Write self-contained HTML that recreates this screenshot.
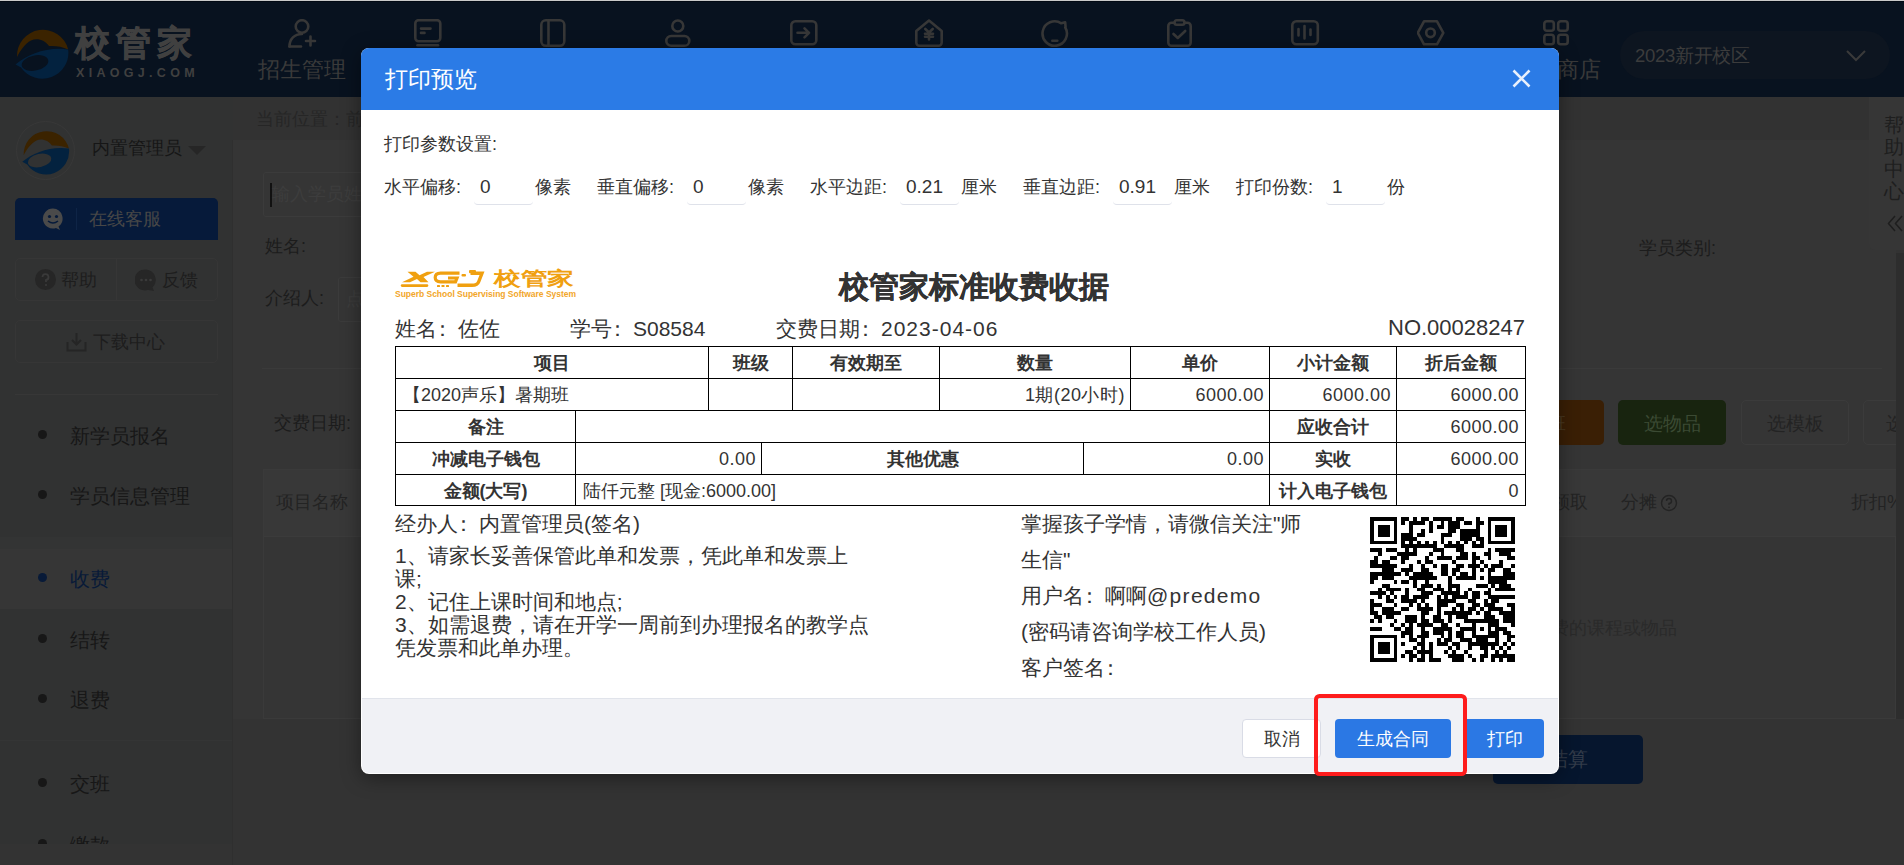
<!DOCTYPE html>
<html><head><meta charset="utf-8">
<style>
*{box-sizing:border-box;margin:0;padding:0}
html,body{width:1904px;height:865px;overflow:hidden;background:#333;font-family:"Liberation Sans",sans-serif;color:#1f1f1f;position:relative}
.a{position:absolute;white-space:nowrap}
#hdr{position:absolute;left:0;top:0;width:1904px;height:97px;background:#08121f;border-top:1px solid #c9c9c9}
.ic{position:absolute;top:18px}
.ic *{fill:none;stroke:#373737;stroke-width:2.6;stroke-linecap:round;stroke-linejoin:round}
#side{position:absolute;left:0;top:97px;width:233px;height:768px;background:#313232}
#modal{position:absolute;left:361px;top:48px;width:1198px;height:726px;background:#fff;border-radius:8px;box-shadow:0 4px 20px rgba(0,0,0,0.4)}
.btn{position:absolute;height:39px;border-radius:4px;font-size:18px;text-align:center;line-height:41px}
.lab{position:absolute;top:177px;font-size:18px;color:#333;white-space:nowrap;line-height:20px}
.inp{position:absolute;top:171px;width:59px;height:34px;border-bottom:1px solid #dfe2ea;border-radius:0 0 4px 4px;font-size:19px;color:#333;padding-left:6px;line-height:32px}
#tt .c{line-height:31px;height:31px}
#tt .r{letter-spacing:0.5px}
#tt .b{font-weight:bold;text-align:center}
.k{font-style:normal;position:relative;left:-5px}
.rtx{position:absolute;font-size:21px;color:#333;white-space:nowrap}
</style></head><body>
<div id="hdr">
  <div class="a" style="left:0;top:0;width:1904px;height:1px;background:#020913"></div>
  <svg class="a" style="left:14px;top:23px" width="58" height="56" viewBox="14 23 58 56">
    <path d="M17 56 A26 26 0 0 1 68.2 48.5 C62 45.5 55 44.5 49 45 C45 39 37 36.5 31 39.5 C25 42.5 20 50 17 56 Z" fill="#3b2300"/>
    <path d="M15.5 63.5 C28 53 48 45.5 68.2 48.5 A26 26 0 0 1 21 66.5 Z" fill="#03223f"/>
    <ellipse cx="35" cy="62" rx="13.5" ry="7.5" transform="rotate(-12 35 62)" fill="#08121f"/>
  </svg>
  <div class="a" style="left:75px;top:17px;font-size:35px;font-weight:900;color:#404040;letter-spacing:6px;line-height:50px;-webkit-text-stroke:0.7px #404040">校管家</div>
  <div class="a" style="left:76px;top:65px;font-size:12.5px;font-weight:bold;color:#404040;letter-spacing:4.3px;line-height:14px">XIAOGJ.COM</div>

  <svg class="ic" style="left:288px" width="30" height="30" viewBox="0 0 30 30"><circle cx="14" cy="7.5" r="6.3"/><path d="M1.5 27.5 C1.5 20 6.5 15 14 15"/><path d="M1.5 27.5 H13"/><path d="M18 22 H27 M22.5 17.5 V26.5"/></svg>
  <svg class="ic" style="left:413px" width="30" height="30" viewBox="0 0 30 30"><rect x="2.3" y="1.2" width="25" height="21" rx="3.2"/><path d="M8 9.6 H17.5 M8 13.9 H11.5"/><path d="M4.5 26.3 H25"/></svg>
  <svg class="ic" style="left:540px" width="30" height="30" viewBox="0 0 30 30"><rect x="1.3" y="1.3" width="23" height="25.5" rx="4.5"/><path d="M8.5 1.5 V26.5"/></svg>
  <svg class="ic" style="left:665px" width="30" height="30" viewBox="0 0 30 30"><circle cx="12.8" cy="7" r="5.5"/><rect x="1.3" y="17" width="23" height="9.8" rx="4.9"/></svg>
  <svg class="ic" style="left:790px" width="30" height="30" viewBox="0 0 30 30"><rect x="1.3" y="2.3" width="25" height="23" rx="4"/><path d="M7.5 13.8 H19 M14.5 9.3 L19 13.8 L14.5 18.3"/></svg>
  <svg class="ic" style="left:915px" width="30" height="30" viewBox="0 0 30 30"><path d="M1.3 12 L14 1.5 L26.7 12 V23.5 A3.2 3.2 0 0 1 23.5 26.8 H4.5 A3.2 3.2 0 0 1 1.3 23.5 Z"/><path d="M10.3 10 L14 13.5 L17.7 10 M14 13.5 V20.5 M10 14.8 H18 M10 17.8 H18" stroke-width="2"/></svg>
  <svg class="ic" style="left:1040px" width="32" height="30" viewBox="0 0 32 30"><path d="M25.3 8.5 A12.2 12.2 0 1 1 21.3 4.3 L25.2 3.3 L25.6 8"/><path d="M12.3 21.8 H17.3"/></svg>
  <svg class="ic" style="left:1167px" width="30" height="30" viewBox="0 0 30 30"><path d="M7.5 3.8 H4.5 A3.2 3.2 0 0 0 1.3 7 V23.5 A3.2 3.2 0 0 0 4.5 26.8 H20.5 A3.2 3.2 0 0 0 23.7 23.5 V7 A3.2 3.2 0 0 0 20.5 3.8 H17.5"/><rect x="7.5" y="1.3" width="10" height="4.5" rx="2.2"/><path d="M6.5 15 L10.8 19 L18.2 12"/></svg>
  <svg class="ic" style="left:1291px" width="30" height="30" viewBox="0 0 30 30"><rect x="1.3" y="2.3" width="25.5" height="23" rx="4"/><path d="M7.5 10 V16.5 M13.5 7 V19.5 M19.5 10.5 V16"/></svg>
  <svg class="ic" style="left:1417px" width="30" height="30" viewBox="0 0 30 30"><path d="M7 2.3 H20 L26.3 13.8 L20 25.3 H7 L0.8 13.8 Z"/><circle cx="13.5" cy="13.8" r="4.3"/></svg>
  <svg class="ic" style="left:1543px" width="30" height="30" viewBox="0 0 30 30"><rect x="1.3" y="2.3" width="9.5" height="9.5" rx="2.5"/><rect x="15.2" y="2.3" width="9.5" height="9.5" rx="2.5"/><rect x="1.3" y="15.8" width="9.5" height="9.5" rx="2.5"/><rect x="15.2" y="15.8" width="9.5" height="9.5" rx="2.5"/></svg>

  <div class="a" style="left:252px;top:54px;width:100px;text-align:center;font-size:22px;color:#3a3a3a;line-height:30px">招生管理</div>
  <div class="a" style="left:1512px;top:54px;width:90px;text-align:center;font-size:22px;color:#3a3a3a;line-height:30px">应用商店</div>

  <div class="a" style="left:1620px;top:30px;width:270px;height:48px;border-radius:24px;background:#0d1520"></div>
  <div class="a" style="left:1635px;top:42px;font-size:18.5px;color:#3c3c3c;line-height:26px;letter-spacing:-0.3px">2023新开校区</div>
  <svg class="a" style="left:1845px;top:48px" width="22" height="14" viewBox="0 0 22 14"><path d="M2 2 L11 11 L20 2" fill="none" stroke="#3a3a3a" stroke-width="2"/></svg>
</div>

<div id="side">
  <div class="a" style="left:15.5px;top:23.5px;width:59px;height:59px;border-radius:50%;border:1px solid #383838"></div>
  <svg class="a" style="left:20.7px;top:29.3px" width="51.3" height="49.6" viewBox="14 23 58 56">
    <path d="M17 56 A26 26 0 0 1 68.2 48.5 C62 45.5 55 44.5 49 45 C45 39 37 36.5 31 39.5 C25 42.5 20 50 17 56 Z" fill="#3b2300"/>
    <path d="M15.5 63.5 C28 53 48 45.5 68.2 48.5 A26 26 0 0 1 21 66.5 Z" fill="#03223f"/>
    <ellipse cx="35" cy="62" rx="13.5" ry="7.5" transform="rotate(-12 35 62)" fill="#313232"/>
  </svg>
  <div class="a" style="left:92px;top:38px;font-size:18px;color:#161616;line-height:26px">内置管理员</div>
  <svg class="a" style="left:187px;top:48px" width="20" height="12" viewBox="0 0 20 12"><path d="M1 1 H19 L10 10Z" fill="#262626"/></svg>

  <div class="a" style="left:15px;top:101px;width:203px;height:42px;background:#061a3a;border-radius:5px 5px 0 0"></div>
  <svg class="a" style="left:42px;top:110px" width="24" height="24" viewBox="0 0 24 24"><path d="M11 1.5 A10 10 0 1 0 14 21 L18 23 L16.5 19.5 A10 10 0 0 0 11 1.5Z" fill="#4a4a4a"/><circle cx="7.5" cy="9.5" r="1.6" fill="#061a3a"/><circle cx="14.5" cy="9.5" r="1.6" fill="#061a3a"/><path d="M6 14 Q11 18 16 14" stroke="#061a3a" stroke-width="1.5" fill="none"/></svg>
  <div class="a" style="left:76px;top:111px;width:1px;height:22px;background:#0e2446"></div>
  <div class="a" style="left:89px;top:109px;font-size:18px;color:#474747;line-height:26px">在线客服</div>

  <div class="a" style="left:15px;top:161px;width:203px;height:43px;border:1px solid #363636;border-radius:5px"></div>
  <div class="a" style="left:116px;top:161px;width:1px;height:43px;background:#363636"></div>
  <svg class="a" style="left:35px;top:172px" width="21" height="21" viewBox="0 0 21 21"><circle cx="10.5" cy="10.5" r="10.5" fill="#262626"/><path d="M7.5 8 A3 3 0 1 1 11 11 V13" stroke="#3a3a3a" stroke-width="1.8" fill="none"/><circle cx="11" cy="16" r="1.1" fill="#3a3a3a"/></svg>
  <div class="a" style="left:61px;top:170px;font-size:18px;color:#1d1d1d;line-height:26px">帮助</div>
  <svg class="a" style="left:135px;top:172px" width="22" height="22" viewBox="0 0 22 22"><path d="M11 0.5 A10.5 10.5 0 1 0 13 21 L19 22 L17.5 18.5 A10.5 10.5 0 0 0 11 0.5Z" fill="#262626"/><circle cx="6.5" cy="11" r="1.3" fill="#3a3a3a"/><circle cx="11" cy="11" r="1.3" fill="#3a3a3a"/><circle cx="15.5" cy="11" r="1.3" fill="#3a3a3a"/></svg>
  <div class="a" style="left:162px;top:170px;font-size:18px;color:#1d1d1d;line-height:26px">反馈</div>

  <div class="a" style="left:15px;top:223px;width:203px;height:43px;border:1px solid #363636;border-radius:5px"></div>
  <svg class="a" style="left:66px;top:235px" width="21" height="20" viewBox="0 0 21 20"><path d="M10.5 1 V12 M6 8 L10.5 12.5 L15 8 M1.5 10 V18.5 H19.5 V10" stroke="#252525" stroke-width="2" fill="none"/></svg>
  <div class="a" style="left:93px;top:232px;font-size:18px;color:#1d1d1d;line-height:26px">下载中心</div>

  <div class="a" style="left:15px;top:297px;width:203px;height:1px;background:#373737"></div>

  <div class="a" style="left:0;top:440px;width:233px;height:12px;background:#333434"></div>
  <div class="a" style="left:0;top:452px;width:233px;height:60px;background:#363636"></div>
  <div class="a" style="left:0;top:643px;width:233px;height:1px;background:#343535"></div>
  <div class="a" style="left:0;top:747px;width:233px;height:21px;background:#333"></div>

  <div class="a" style="left:38px;top:333px;width:9px;height:9px;border-radius:50%;background:#171717"></div>
  <div class="a" style="left:70px;top:326px;font-size:20px;color:#171717;line-height:26px">新学员报名</div>
  <div class="a" style="left:38px;top:393px;width:9px;height:9px;border-radius:50%;background:#171717"></div>
  <div class="a" style="left:70px;top:386px;font-size:20px;color:#171717;line-height:26px">学员信息管理</div>
  <div class="a" style="left:38px;top:476px;width:9px;height:9px;border-radius:50%;background:#081a38"></div>
  <div class="a" style="left:70px;top:469px;font-size:20px;color:#081a38;line-height:26px">收费</div>
  <div class="a" style="left:38px;top:537px;width:9px;height:9px;border-radius:50%;background:#171717"></div>
  <div class="a" style="left:70px;top:530px;font-size:20px;color:#171717;line-height:26px">结转</div>
  <div class="a" style="left:38px;top:597px;width:9px;height:9px;border-radius:50%;background:#171717"></div>
  <div class="a" style="left:70px;top:590px;font-size:20px;color:#171717;line-height:26px">退费</div>
  <div class="a" style="left:38px;top:681px;width:9px;height:9px;border-radius:50%;background:#171717"></div>
  <div class="a" style="left:70px;top:674px;font-size:20px;color:#171717;line-height:26px">交班</div>
  <div class="a" style="left:0;top:727px;width:233px;height:20px;overflow:hidden">
    <div class="a" style="left:38px;top:15px;width:9px;height:9px;border-radius:50%;background:#171717"></div>
    <div class="a" style="left:70px;top:8px;font-size:20px;color:#171717;line-height:26px">缴款</div>
  </div>
</div>

<!-- content -->
<div class="a" style="left:233px;top:97px;width:1671px;height:43px;background:#323232"></div>
<div class="a" style="left:256px;top:106px;font-size:17.5px;color:#262626;line-height:26px">当前位置：前台业务 &gt; 收费</div>
<div class="a" style="left:232px;top:140px;width:1664px;height:725px;background:#353535;border-left:1px solid #2f2f2f"></div>
<div class="a" style="left:263px;top:172px;width:300px;height:45px;border:1px solid #3b3b3b;border-radius:3px"></div>
<div class="a" style="left:270px;top:183px;width:1.5px;height:24px;background:#111"></div>
<div class="a" style="left:272px;top:181px;font-size:18px;color:#3d3d3d;line-height:26px">输入学员姓名</div>
<div class="a" style="left:265px;top:233px;font-size:18px;color:#1c1c1c;line-height:26px">姓名:</div>
<div class="a" style="left:265px;top:285px;font-size:18px;color:#1c1c1c;line-height:26px">介绍人:</div>
<div class="a" style="left:338px;top:277px;width:200px;height:45px;border:1px solid #3b3b3b;border-radius:3px"></div>
<div class="a" style="left:346px;top:286px;font-size:18px;color:#3d3d3d;line-height:26px">点击选择</div>
<div class="a" style="left:262px;top:368px;width:1620px;height:1px;background:#3a3a3a"></div>
<div class="a" style="left:274px;top:410px;font-size:18px;color:#1c1c1c;line-height:26px">交费日期:</div>
<div class="a" style="left:1639px;top:235px;font-size:18px;color:#1c1c1c;line-height:26px">学员类别:</div>

<div class="a" style="left:1490px;top:400px;width:114px;height:45px;background:#3a1f05;border-radius:5px"></div>
<div class="a" style="left:1490px;top:411px;width:114px;text-align:center;font-size:18.5px;color:#4a3a22;line-height:26px">选班</div>
<div class="a" style="left:1618px;top:400px;width:108px;height:45px;background:#18240f;border-radius:5px"></div>
<div class="a" style="left:1618px;top:411px;width:108px;text-align:center;font-size:18.5px;color:#3b4a33;line-height:26px">选物品</div>
<div class="a" style="left:1741px;top:400px;width:108px;height:45px;border:1px solid #3b3b3b;border-radius:5px"></div>
<div class="a" style="left:1741px;top:411px;width:108px;text-align:center;font-size:18.5px;color:#232323;line-height:26px">选模板</div>
<div class="a" style="left:1863px;top:400px;width:60px;height:45px;border:1px solid #3b3b3b;border-radius:5px"></div>
<div class="a" style="left:1886px;top:411px;font-size:18.5px;color:#232323;line-height:26px">选</div>

<div class="a" style="left:263px;top:469px;width:1633px;height:250px;border:1px solid #3a3a3a"></div>
<div class="a" style="left:264px;top:470px;width:1632px;height:67px;background:#383838;border-bottom:1px solid #3b3b3b"></div>
<div class="a" style="left:276px;top:489px;font-size:18px;color:#232323;line-height:26px">项目名称</div>
<div class="a" style="left:1552px;top:489px;font-size:18px;color:#232323;line-height:26px">领取</div>
<div class="a" style="left:1621px;top:489px;font-size:18px;color:#232323;line-height:26px">分摊</div>
<svg class="a" style="left:1660px;top:494px" width="18" height="18" viewBox="0 0 18 18"><circle cx="9" cy="9" r="7.5" stroke="#232323" stroke-width="1.4" fill="none"/><path d="M6.5 7 A2.5 2.5 0 1 1 9 9.5 V11" stroke="#232323" stroke-width="1.4" fill="none"/><circle cx="9" cy="13.3" r="0.9" fill="#232323"/></svg>
<div class="a" style="left:1851px;top:489px;font-size:18px;color:#232323;line-height:26px">折扣%</div>
<div class="a" style="left:1479px;top:615px;font-size:18px;color:#2a2a2a;line-height:26px">请选择收费的课程或物品</div>
<div class="a" style="left:1896px;top:253px;width:8px;height:466px;background:#2d2d2d"></div>
<div class="a" style="left:233px;top:719px;width:1671px;height:146px;background:#333"></div>
<div class="a" style="left:1493px;top:735px;width:150px;height:49px;background:#06162e;border-radius:5px"></div>
<div class="a" style="left:1493px;top:746px;width:150px;text-align:center;font-size:20px;color:#333c4a;line-height:26px">结算</div>

<div class="a" style="left:1869px;top:97px;width:40px;height:153px;background:#363636;border-radius:0 0 0 6px"></div>
<div class="a" style="left:1884px;top:114px;font-size:20px;color:#1e1e1e;line-height:22px;white-space:normal;width:22px">帮助中心</div>
<svg class="a" style="left:1884px;top:213px" width="20" height="20" viewBox="1884 213 20 20"><path d="M1895 216 L1888.5 223.5 L1895 231 M1902 216 L1895.5 223.5 L1902 231" stroke="#1e1e1e" stroke-width="1.5" fill="none"/></svg>
<div id="modal"></div>
<div class="a" style="left:361px;top:48px;width:1198px;height:62px;background:#2b7be6;border-radius:8px 8px 0 0"></div>
<div class="a" style="left:385px;top:64px;font-size:23px;color:#fff;line-height:30px">打印预览</div>
<svg class="a" style="left:1511px;top:68px" width="21" height="21" viewBox="0 0 21 21"><path d="M2.5 2.5 L18.5 18.5 M18.5 2.5 L2.5 18.5" stroke="#e8f0fc" stroke-width="2.6"/></svg>

<div class="a" style="left:384px;top:131px;font-size:18px;color:#333;line-height:26px">打印参数设置:</div>
<div class="lab" style="left:384px">水平偏移:</div><div class="inp" style="left:474px">0</div><div class="lab" style="left:535px">像素</div>
<div class="lab" style="left:597px">垂直偏移:</div><div class="inp" style="left:687px">0</div><div class="lab" style="left:748px">像素</div>
<div class="lab" style="left:810px">水平边距:</div><div class="inp" style="left:900px">0.21</div><div class="lab" style="left:961px">厘米</div>
<div class="lab" style="left:1023px">垂直边距:</div><div class="inp" style="left:1113px">0.91</div><div class="lab" style="left:1174px">厘米</div>
<div class="lab" style="left:1236px">打印份数:</div><div class="inp" style="left:1326px">1</div><div class="lab" style="left:1387px">份</div>

<!-- receipt logo -->
<svg class="a" style="left:400px;top:268px" width="86" height="22" viewBox="0 0 86 22">
<g fill="#f0a010">
<rect x="0.8" y="16.2" width="27.5" height="2.7" rx="1.3"/>
<path d="M7.5 3.7 H15.5 L19.5 7.2 L27 3.7 H35 L23.5 9 L28.5 14.2 H20.5 L17 11 L10 14.2 H2 L13.5 8.8 Z"/>
<rect x="37" y="17" width="3" height="2" rx="0.6"/><rect x="41.5" y="17" width="3" height="2" rx="0.6"/><rect x="46" y="17" width="3" height="2" rx="0.6"/>
<rect x="61.5" y="6" width="4.5" height="2.6" rx="1"/><rect x="69" y="2" width="7" height="3.2" rx="1"/>
</g>
<path d="M59.5 5.2 H40.5 Q35.2 5.2 35.2 9.6 Q35.2 13.8 40.5 13.8 H55.5 L57 10 H48" fill="none" stroke="#f0a010" stroke-width="3.2"/>
<path d="M70.5 5.3 H82 L78.8 13.5 Q77.5 17.3 72 17.3 H57.5" fill="none" stroke="#f0a010" stroke-width="3.4"/>
</svg>
<div class="a" style="left:494px;top:267px;font-size:19px;font-weight:bold;color:#f0a010;line-height:24px;transform:scaleX(1.4);transform-origin:0 0">校管家</div>
<div class="a" style="left:395px;top:289px;font-size:8.5px;font-weight:bold;color:#f2a62a;line-height:10px;letter-spacing:-0.02px">Superb School Supervising Software System</div>

<div class="a" style="left:839px;top:268px;font-size:30px;font-weight:bold;color:#333;line-height:38px;-webkit-text-stroke:0.3px #333">校管家标准收费收据</div>
<div class="rtx" style="left:395px;top:315px;line-height:28px">姓名<i class="k">：</i>佐佐</div>
<div class="rtx" style="left:570px;top:315px;line-height:28px">学号<i class="k">：</i>S08584</div>
<div class="rtx" style="left:776px;top:315px;line-height:28px">交费日期<i class="k">：</i><span style="letter-spacing:1px">2023-04-06</span></div>
<div class="rtx" style="left:1324px;top:314px;width:201px;text-align:right;line-height:28px;font-size:22px;letter-spacing:0px">NO.00028247</div>

<!-- table lines -->
<div class="a" style="left:395px;top:346px;width:1131px;height:1px;background:#000"></div>
<div class="a" style="left:395px;top:378px;width:1131px;height:1px;background:#000"></div>
<div class="a" style="left:395px;top:410px;width:1131px;height:1px;background:#000"></div>
<div class="a" style="left:395px;top:442px;width:1131px;height:1px;background:#000"></div>
<div class="a" style="left:395px;top:474px;width:1131px;height:1px;background:#000"></div>
<div class="a" style="left:395px;top:505px;width:1131px;height:1px;background:#000"></div>
<div class="a" style="left:395px;top:346px;width:1px;height:160px;background:#000"></div>
<div class="a" style="left:1525px;top:346px;width:1px;height:160px;background:#000"></div>
<div class="a" style="left:708px;top:346px;width:1px;height:64px;background:#000"></div>
<div class="a" style="left:792px;top:346px;width:1px;height:64px;background:#000"></div>
<div class="a" style="left:939px;top:346px;width:1px;height:64px;background:#000"></div>
<div class="a" style="left:1130px;top:346px;width:1px;height:64px;background:#000"></div>
<div class="a" style="left:1269px;top:346px;width:1px;height:160px;background:#000"></div>
<div class="a" style="left:1396px;top:346px;width:1px;height:160px;background:#000"></div>
<div class="a" style="left:575px;top:410px;width:1px;height:96px;background:#000"></div>
<div class="a" style="left:761px;top:442px;width:1px;height:32px;background:#000"></div>
<div class="a" style="left:1083px;top:442px;width:1px;height:32px;background:#000"></div>

<div id="tt" style="position:absolute;left:0;top:0;width:1904px;height:865px;font-size:18px;color:#333">
<div class="a b c" style="left:396px;width:312px;top:348px">项目</div>
<div class="a b c" style="left:709px;width:83px;top:348px">班级</div>
<div class="a b c" style="left:793px;width:146px;top:348px">有效期至</div>
<div class="a b c" style="left:940px;width:190px;top:348px">数量</div>
<div class="a b c" style="left:1131px;width:138px;top:348px">单价</div>
<div class="a b c" style="left:1270px;width:126px;top:348px">小计金额</div>
<div class="a b c" style="left:1397px;width:128px;top:348px">折后金额</div>
<div class="a c" style="left:403px;top:380px">【2020声乐】暑期班</div>
<div class="a c r" style="right:779px;top:380px">1期(20小时)</div>
<div class="a c r" style="right:640px;top:380px">6000.00</div>
<div class="a c r" style="right:513px;top:380px">6000.00</div>
<div class="a c r" style="right:385px;top:380px">6000.00</div>
<div class="a b c" style="left:396px;width:179px;top:412px">备注</div>
<div class="a b c" style="left:1270px;width:126px;top:412px">应收合计</div>
<div class="a c r" style="right:385px;top:412px">6000.00</div>
<div class="a b c" style="left:396px;width:179px;top:444px">冲减电子钱包</div>
<div class="a c r" style="right:1148px;top:444px">0.00</div>
<div class="a b c" style="left:762px;width:321px;top:444px">其他优惠</div>
<div class="a c r" style="right:640px;top:444px">0.00</div>
<div class="a b c" style="left:1270px;width:126px;top:444px">实收</div>
<div class="a c r" style="right:385px;top:444px">6000.00</div>
<div class="a b c" style="left:396px;width:179px;top:476px">金额(大写)</div>
<div class="a c" style="left:583px;top:476px">陆仟元整 [现金:6000.00]</div>
<div class="a b c" style="left:1270px;width:126px;top:476px">计入电子钱包</div>
<div class="a c r" style="right:385px;top:476px">0</div>
</div>

<div class="rtx" style="left:395px;top:510px;line-height:28px">经办人<i class="k">：</i>内置管理员(签名)</div>
<div class="rtx" style="left:395px;top:544px;line-height:23px">1、请家长妥善保管此单和发票，凭此单和发票上<br>课;<br>2、记住上课时间和地点;<br>3、如需退费，请在开学一周前到办理报名的教学点<br>凭发票和此单办理。</div>
<div class="rtx" style="left:1021px;top:506px;line-height:36px">掌握孩子学情，请微信关注"师<br>生信"<br>用户名<i class="k">：</i>啊啊<span style="letter-spacing:1.3px">@predemo</span><br>(密码请咨询学校工作人员)<br>客户签名<i class="k">：</i></div>

<svg class="a" style="left:1370px;top:517px" width="145" height="145" viewBox="0 0 37 37" shape-rendering="crispEdges"><path d="M0 0h7v1h-7zM8 0h2v1h-2zM11 0h1v1h-1zM13 0h2v1h-2zM16 0h5v1h-5zM22 0h2v1h-2zM27 0h1v1h-1zM30 0h7v1h-7zM0 1h1v1h-1zM6 1h1v1h-1zM8 1h1v1h-1zM10 1h4v1h-4zM15 1h1v1h-1zM18 1h1v1h-1zM20 1h3v1h-3zM24 1h2v1h-2zM27 1h2v1h-2zM30 1h1v1h-1zM36 1h1v1h-1zM0 2h1v1h-1zM2 2h3v1h-3zM6 2h1v1h-1zM10 2h1v1h-1zM15 2h1v1h-1zM17 2h2v1h-2zM20 2h3v1h-3zM27 2h1v1h-1zM30 2h1v1h-1zM32 2h3v1h-3zM36 2h1v1h-1zM0 3h1v1h-1zM2 3h3v1h-3zM6 3h1v1h-1zM10 3h1v1h-1zM13 3h1v1h-1zM15 3h1v1h-1zM20 3h2v1h-2zM23 3h5v1h-5zM30 3h1v1h-1zM32 3h3v1h-3zM36 3h1v1h-1zM0 4h1v1h-1zM2 4h3v1h-3zM6 4h1v1h-1zM8 4h3v1h-3zM12 4h2v1h-2zM18 4h3v1h-3zM23 4h5v1h-5zM30 4h1v1h-1zM32 4h3v1h-3zM36 4h1v1h-1zM0 5h1v1h-1zM6 5h1v1h-1zM8 5h4v1h-4zM18 5h1v1h-1zM23 5h3v1h-3zM27 5h2v1h-2zM30 5h1v1h-1zM36 5h1v1h-1zM0 6h7v1h-7zM8 6h1v1h-1zM10 6h1v1h-1zM12 6h1v1h-1zM14 6h1v1h-1zM16 6h1v1h-1zM18 6h1v1h-1zM20 6h1v1h-1zM22 6h1v1h-1zM24 6h1v1h-1zM26 6h1v1h-1zM28 6h1v1h-1zM30 6h7v1h-7zM8 7h9v1h-9zM19 7h5v1h-5zM26 7h3v1h-3zM0 8h3v1h-3zM4 8h3v1h-3zM9 8h1v1h-1zM11 8h1v1h-1zM16 8h3v1h-3zM22 8h2v1h-2zM30 8h1v1h-1zM32 8h5v1h-5zM2 9h1v1h-1zM7 9h5v1h-5zM15 9h1v1h-1zM18 9h1v1h-1zM23 9h2v1h-2zM26 9h1v1h-1zM29 9h2v1h-2zM33 9h3v1h-3zM1 10h1v1h-1zM5 10h2v1h-2zM8 10h2v1h-2zM14 10h1v1h-1zM17 10h4v1h-4zM22 10h3v1h-3zM26 10h2v1h-2zM30 10h1v1h-1zM35 10h2v1h-2zM0 11h2v1h-2zM3 11h2v1h-2zM8 11h1v1h-1zM12 11h1v1h-1zM14 11h2v1h-2zM21 11h1v1h-1zM26 11h1v1h-1zM28 11h1v1h-1zM33 11h1v1h-1zM0 12h7v1h-7zM10 12h1v1h-1zM13 12h1v1h-1zM16 12h1v1h-1zM18 12h2v1h-2zM22 12h2v1h-2zM25 12h3v1h-3zM29 12h1v1h-1zM31 12h3v1h-3zM36 12h1v1h-1zM3 13h3v1h-3zM8 13h3v1h-3zM13 13h2v1h-2zM18 13h2v1h-2zM21 13h2v1h-2zM26 13h1v1h-1zM28 13h1v1h-1zM30 13h2v1h-2zM34 13h2v1h-2zM0 14h8v1h-8zM9 14h1v1h-1zM11 14h5v1h-5zM18 14h2v1h-2zM21 14h1v1h-1zM23 14h2v1h-2zM26 14h1v1h-1zM30 14h1v1h-1zM34 14h3v1h-3zM0 15h2v1h-2zM3 15h3v1h-3zM10 15h7v1h-7zM20 15h1v1h-1zM22 15h5v1h-5zM28 15h1v1h-1zM30 15h7v1h-7zM0 16h1v1h-1zM6 16h1v1h-1zM8 16h2v1h-2zM11 16h1v1h-1zM14 16h1v1h-1zM20 16h1v1h-1zM30 16h5v1h-5zM3 17h2v1h-2zM11 17h1v1h-1zM13 17h3v1h-3zM17 17h1v1h-1zM20 17h3v1h-3zM27 17h3v1h-3zM31 17h1v1h-1zM33 17h3v1h-3zM2 18h1v1h-1zM4 18h4v1h-4zM9 18h1v1h-1zM12 18h2v1h-2zM16 18h3v1h-3zM20 18h1v1h-1zM22 18h1v1h-1zM25 18h1v1h-1zM30 18h1v1h-1zM32 18h5v1h-5zM0 19h4v1h-4zM5 19h1v1h-1zM9 19h1v1h-1zM13 19h3v1h-3zM18 19h5v1h-5zM24 19h1v1h-1zM26 19h2v1h-2zM29 19h2v1h-2zM2 20h1v1h-1zM4 20h1v1h-1zM6 20h1v1h-1zM8 20h2v1h-2zM11 20h4v1h-4zM17 20h1v1h-1zM19 20h1v1h-1zM21 20h4v1h-4zM26 20h2v1h-2zM30 20h7v1h-7zM0 21h1v1h-1zM4 21h2v1h-2zM8 21h4v1h-4zM13 21h1v1h-1zM17 21h5v1h-5zM25 21h2v1h-2zM29 21h1v1h-1zM31 21h2v1h-2zM0 22h3v1h-3zM6 22h1v1h-1zM10 22h1v1h-1zM12 22h1v1h-1zM14 22h1v1h-1zM17 22h3v1h-3zM22 22h2v1h-2zM26 22h2v1h-2zM29 22h3v1h-3zM35 22h2v1h-2zM0 23h1v1h-1zM3 23h3v1h-3zM8 23h2v1h-2zM12 23h4v1h-4zM17 23h1v1h-1zM21 23h1v1h-1zM23 23h1v1h-1zM25 23h2v1h-2zM28 23h1v1h-1zM30 23h4v1h-4zM36 23h1v1h-1zM0 24h2v1h-2zM3 24h5v1h-5zM13 24h2v1h-2zM17 24h1v1h-1zM19 24h7v1h-7zM27 24h1v1h-1zM29 24h2v1h-2zM33 24h4v1h-4zM1 25h2v1h-2zM4 25h2v1h-2zM9 25h3v1h-3zM13 25h1v1h-1zM16 25h2v1h-2zM20 25h1v1h-1zM22 25h3v1h-3zM29 25h3v1h-3zM34 25h3v1h-3zM0 26h1v1h-1zM2 26h1v1h-1zM6 26h1v1h-1zM9 26h3v1h-3zM13 26h2v1h-2zM16 26h3v1h-3zM20 26h1v1h-1zM24 26h9v1h-9zM34 26h3v1h-3zM5 27h1v1h-1zM8 27h1v1h-1zM10 27h1v1h-1zM12 27h4v1h-4zM18 27h2v1h-2zM22 27h1v1h-1zM26 27h1v1h-1zM30 27h3v1h-3zM36 27h1v1h-1zM0 28h3v1h-3zM6 28h2v1h-2zM9 28h2v1h-2zM13 28h1v1h-1zM16 28h5v1h-5zM23 28h4v1h-4zM28 28h1v1h-1zM30 28h1v1h-1zM32 28h3v1h-3zM8 29h3v1h-3zM13 29h2v1h-2zM16 29h3v1h-3zM20 29h1v1h-1zM22 29h2v1h-2zM26 29h1v1h-1zM30 29h3v1h-3zM34 29h2v1h-2zM0 30h7v1h-7zM8 30h1v1h-1zM10 30h1v1h-1zM12 30h3v1h-3zM18 30h1v1h-1zM20 30h1v1h-1zM22 30h2v1h-2zM26 30h7v1h-7zM35 30h2v1h-2zM0 31h1v1h-1zM6 31h1v1h-1zM10 31h2v1h-2zM13 31h1v1h-1zM17 31h1v1h-1zM19 31h2v1h-2zM23 31h3v1h-3zM27 31h3v1h-3zM32 31h1v1h-1zM35 31h1v1h-1zM0 32h1v1h-1zM2 32h3v1h-3zM6 32h1v1h-1zM8 32h1v1h-1zM12 32h2v1h-2zM15 32h1v1h-1zM17 32h3v1h-3zM21 32h2v1h-2zM25 32h8v1h-8zM34 32h1v1h-1zM36 32h1v1h-1zM0 33h1v1h-1zM2 33h3v1h-3zM6 33h1v1h-1zM11 33h1v1h-1zM13 33h1v1h-1zM15 33h1v1h-1zM20 33h1v1h-1zM22 33h1v1h-1zM25 33h1v1h-1zM28 33h2v1h-2zM31 33h1v1h-1zM33 33h1v1h-1zM35 33h1v1h-1zM0 34h1v1h-1zM2 34h3v1h-3zM6 34h1v1h-1zM9 34h2v1h-2zM12 34h4v1h-4zM19 34h1v1h-1zM21 34h1v1h-1zM24 34h1v1h-1zM29 34h1v1h-1zM32 34h1v1h-1zM34 34h1v1h-1zM0 35h1v1h-1zM6 35h1v1h-1zM8 35h1v1h-1zM10 35h2v1h-2zM13 35h1v1h-1zM15 35h1v1h-1zM20 35h4v1h-4zM25 35h1v1h-1zM28 35h2v1h-2zM31 35h6v1h-6zM0 36h7v1h-7zM10 36h1v1h-1zM12 36h2v1h-2zM15 36h3v1h-3zM21 36h3v1h-3zM26 36h1v1h-1zM28 36h1v1h-1zM31 36h1v1h-1zM33 36h1v1h-1zM35 36h2v1h-2z" fill="#000"/></svg>

<div class="a" style="left:362px;top:698px;width:1196px;height:75px;background:#f0f1f5;border-top:1px solid #e1e4eb;border-radius:0 0 7px 7px"></div>
<div class="btn" style="left:1242px;top:719px;width:79px;background:#fff;border:1px solid #d9dce6;color:#333;line-height:39px">取消</div>
<div class="btn" style="left:1335px;top:719px;width:116px;background:#2b78e4;color:#fff">生成合同</div>
<div class="btn" style="left:1463px;top:719px;width:81px;background:#2b78e4;color:#fff;text-indent:2px">打印</div>
<div class="a" style="left:1314px;top:694px;width:153px;height:82px;border:4.5px solid #fe1c1c;border-radius:5.5px"></div>
</body></html>
